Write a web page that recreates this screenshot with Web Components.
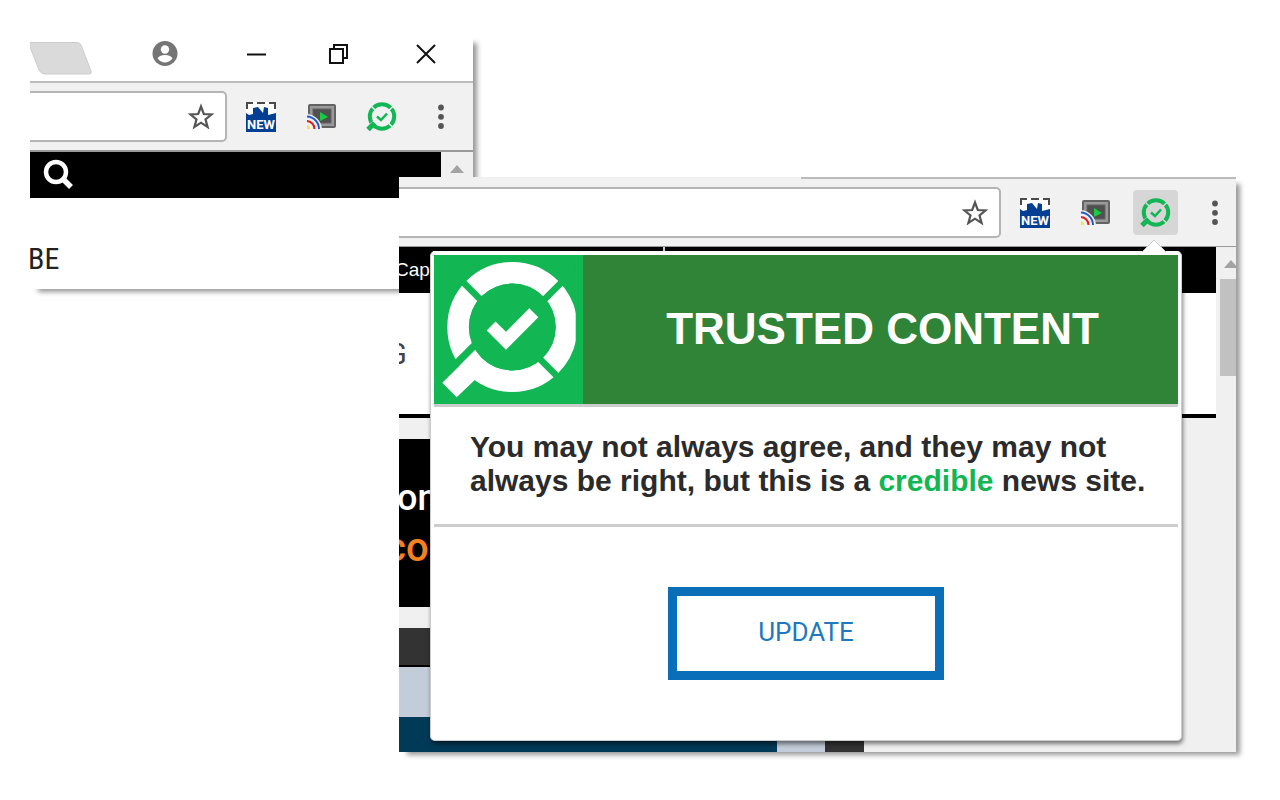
<!DOCTYPE html>
<html lang="en">
<head>
<meta charset="utf-8">
<title>Trusted Content extension</title>
<style>
html, body { margin: 0; background: #fff; }
body { font-family: "Liberation Sans", Arial, sans-serif; color: #222; }
</style>
</head>
<body>
<extension-tour></extension-tour>

<script>
const define = (name, html) => {
  const template = document.createElement('template');
  template.innerHTML = html;
  customElements.define(name, class extends HTMLElement {
    constructor() {
      super();
      this.attachShadow({ mode: 'open' }).append(template.content.cloneNode(true));
    }
  });
};

/* Large magnifier logo with a tick */
define('trust-logo', `
<style>
  :host { display: block; background: #12b754; }
  svg { display: block; width: 100%; height: 100%; }
</style>
<svg viewBox="0 0 149 149" aria-hidden="true">
  <clipPath id="edge"><rect width="141.700" height="149"/></clipPath>
  <g clip-path="url(#edge)">
    <circle cx="78.300" cy="72" r="54.200" fill="none" stroke="#fff" stroke-width="21.600"/>
    <g stroke="#12b754">
      <path d="M1.800 0L150 148.200M78 76.800L150 4.800" stroke-width="6.600"/>
      <path d="M65 66L0 131" stroke-width="7.400"/>
    </g>
    <path d="M8.300 127.800L22.700 142.200L41 124.800L60 122L41 95.500Z" fill="#fff"/>
    <circle cx="78.300" cy="72" r="43.400" fill="#12b754"/>
  </g>
  <path d="M52.700 75.500L61.500 66.500L72 76.700L95.300 53.300L104.300 62.200L72 94.800Z" fill="#fff"/>
</svg>`);

/* Row of extension buttons and the browser menu */
define('extension-bar', `
<style>
  :host { display: flex; align-items: center; }
  button { display: grid; place-items: center; width: 60px; height: 45px; margin: 0; padding: 0; border: 0; background: none; }
  span { display: grid; place-items: center; width: 45px; height: 45px; border-radius: 4px; background: var(--active, transparent); }
  svg { display: block; width: 32px; height: 32px; }
  text { font: bold 13px Roboto, sans-serif; fill: #fff; }
</style>
<button aria-label="New tab extension">
  <svg viewBox="0 0 32 32">
    <path d="M1 1H31V31H1Z" fill="#fff"/>
    <path d="M2 8V2H8M12 2H20M24 2H30V8" fill="none" stroke="#4a4a4a" stroke-width="2"/>
    <path d="M1 31V12L4 14L8 13V7L13 6L18 12L19 6L23 7V14L31 12V31Z" fill="#053f93"/>
    <text x="2" y="28">NEW</text>
  </svg>
</button>
<button aria-label="Cast">
  <svg viewBox="0 0 32 32">
    <rect x="4" y="4" width="26" height="22" rx="1" fill="#999" stroke="#636363" stroke-width="2"/>
    <rect x="8" y="8" width="18" height="14" fill="#505050" stroke="#636363"/>
    <path d="M15 11L23 16L15 20Z" fill="#18cb42"/>
    <path d="M1 13A16 16 0 0 1 17 29H1Z" fill="#f1f1f1"/>
    <g fill="none" stroke-width="2">
      <path d="M2 15.500A12.500 12.500 0 0 1 14 28" stroke="#2457c5"/>
      <path d="M2 20A8 8 0 0 1 9.500 28" stroke="#d6221c"/>
    </g>
    <path d="M2 24A4 4 0 0 1 5 28H2Z" fill="#f4e34c"/>
  </svg>
</button>
<button aria-label="Trusted Content">
  <span>
    <svg viewBox="0 0 32 32">
      <circle cx="17" cy="15.500" r="12.200" fill="none" stroke="#12b754" stroke-width="4"/>
      <path d="M5 4L30 28.500M18 15L30 3.500M11 18L1 27" stroke="var(--active, #f1f1f1)" stroke-width="1.500"/>
      <path d="M9.500 22L3 28.500" stroke="#12b754" stroke-width="5"/>
      <path d="M12 15.500L16 19L22 12.500" fill="none" stroke="#12b754" stroke-width="2.500"/>
    </svg>
  </span>
</button>
<button aria-label="Menu">
  <svg viewBox="0 0 32 32" fill="#555"><circle cx="16" cy="6.500" r="2.900"/><circle cx="16" cy="15.800" r="2.900"/><circle cx="16" cy="25" r="2.900"/></svg>
</button>`);

/* Right-hand end of the address bar, with its bookmark star */
define('browser-toolbar', `
<style>
  :host { display: flex; align-items: center; gap: 4px; height: 67px; box-sizing: border-box; background: #f1f1f1; border-bottom: 1px solid #999; }
  .address { flex: 1; min-width: 0; display: flex; align-items: center; height: 51px; box-sizing: border-box; background: #fff;
    border: 2px solid #b4b4b4; border-left: 0; border-radius: 0 5px 5px 0; padding-right: 10px; }
  input { flex: 1; min-width: 0; border: 0; background: none; outline: 0; font: 18px Roboto, sans-serif; }
  button { border: 0; background: none; padding: 0; }
  svg { display: block; width: 28px; height: 28px; }
  extension-bar { margin-right: var(--bar-end, 2px); }
</style>
<div class="address">
  <input type="text" aria-label="Address">
  <button aria-label="Bookmark this page"><svg viewBox="0 0 28 28"><path d="M14 3.500L16.800 11L24.500 11.500L18.500 16.300L20.600 24L14 19.700L7.400 24L9.500 16.300L3.500 11.500L11.200 11Z" fill="none" stroke="#555" stroke-width="2.200"/></svg></button>
</div>
<extension-bar></extension-bar>`);

/* Scroll bar track with its arrow; a thumb is shown when passed in */
define('scroll-track', `
<style>
  :host { display: block; background: #f0f0f0; overflow: hidden; }
  svg { display: block; width: 14px; height: 8px; margin: 13px 0 11px var(--arrow, 9px); }
  ::slotted(i) { display: block; height: 97px; margin-left: 4px; background: #c1c1c1; }
</style>
<svg viewBox="0 0 14 8"><path d="M0 8L7 0L14 8Z" fill="#a3a3a3"/></svg>
<slot></slot>`);

/* Title bar: inactive tab, profile and window controls */
define('title-bar', `
<style>
  :host { display: flex; align-items: start; justify-content: space-between; height: 47px; box-sizing: border-box; background: #fff; border-bottom: 2px solid #bcbcbc; }
  .tab { width: 62px; height: 33px; margin-top: 6px; }
  .controls { display: flex; gap: 59px; padding: 4px 33px 0 0; }
  button { border: 0; padding: 0; background: none; }
  svg { display: block; }
</style>
<svg class="tab" viewBox="0 0 62 33"><path d="M0 0.500H47Q50 0.500 51 3L61 29Q62 32 59 32H15Q11 32 9 28L0 5Z" fill="#dadada" stroke="#ccc"/></svg>
<div class="controls">
  <button aria-label="Profile"><svg width="28" height="28" viewBox="0 0 28 28"><circle cx="14" cy="13.500" r="12.500" fill="#757575"/><circle cx="14" cy="9.500" r="4.200" fill="#fff"/><path d="M6.500 18.500Q8 15 14 15T21.500 18.500Q18 22.500 14 22.500T6.500 18.500Z" fill="#fff"/></svg></button>
  <button aria-label="Minimise"><svg width="28" height="28" viewBox="0 0 28 28"><path d="M9 14.500H28" stroke="#111" stroke-width="2"/></svg></button>
  <button aria-label="Restore"><svg width="28" height="28" viewBox="0 0 28 28" fill="none" stroke="#111" stroke-width="2"><path d="M5 9H18V23H5ZM9 8V5H22V18H19"/></svg></button>
  <button aria-label="Close"><svg width="28" height="28" viewBox="0 0 28 28"><path d="M5 5L23 23M23 5L5 23" stroke="#111" stroke-width="2"/></svg></button>
</div>`);

/* Back window: the extension icon in an ordinary page */
define('plain-window', `
<style>
  :host { display: grid; grid-template-columns: minmax(0, 1fr); grid-template-rows: auto auto 1fr; overflow: hidden; background: #fff; box-shadow: 6px 5px 5px -2px #999; }
  browser-toolbar { height: 69px; border-bottom-width: 2px; }
  .page { display: grid; grid-template-columns: 1fr 32px; }
  .bar { height: 46px; background: #000; }
  .bar button { display: block; border: 0; padding: 7px 0 0 13px; background: none; }
  svg { display: block; width: 32px; height: 32px; }
  .link { display: block; margin: 42px 0 0; color: #222; text-decoration: none; font: 30px/38px "Liberation Sans Narrow", "Roboto Condensed", Roboto, sans-serif; text-indent: -2px; }
  scroll-track { height: 46px; }
</style>
<title-bar></title-bar>
<browser-toolbar></browser-toolbar>
<div class="page">
  <div>
    <div class="bar"><button aria-label="Search"><svg viewBox="0 0 32 32" fill="none" stroke="#fff"><circle cx="13" cy="13" r="10" stroke-width="4.500"/><path d="M20 20L28 28" stroke-width="5.500"/></svg></button></div>
    <a class="link" href="#">BE</a>
  </div>
  <scroll-track></scroll-track>
</div>`);

/* Popup opened by the extension icon */
define('trust-popup', `
<style>
  :host { display: flex; flex-direction: column; box-sizing: border-box; padding: 3px; background: #fff; border: 1px solid #ccc; border-top-color: #fff; border-radius: 5px; box-shadow: 1px 3px 4px rgba(0,0,0,.5); }
  .arrow { position: absolute; right: 15px; top: -13px; width: 24px; height: 13px; }
  header { display: grid; grid-template-columns: 149px 1fr; height: 149px; background: #2f8437; color: #fff; border-bottom: 3px solid #ccc; }
  h1 { margin: 0; padding-left: 4px; text-align: center; font-size: 44px; line-height: 148px; white-space: nowrap; }
  p { margin: 0; padding: 23px 28px 26px 36px; font-size: 30px; line-height: 34px; font-weight: bold; color: #2b2b2b; border-bottom: 3px solid #ccc; }
  strong { color: #12b754; }
  .action { flex: 1; text-align: center; padding-top: 60px; }
  .action button { box-sizing: border-box; width: 37%; height: 93px; padding: 0 0 4px; border: 9px solid #0b6eb8; background: #fff; color: #2079be; font: 26px Roboto, sans-serif; }
</style>
<svg class="arrow" viewBox="0 0 24 13"><path d="M0 13L12 1L24 13Z" fill="#fff"/><path d="M0 13L12 1L24 13" fill="none" stroke="#ccc"/></svg>
<header><trust-logo></trust-logo><h1>TRUSTED CONTENT</h1></header>
<p>You may not always agree, and they may not always be right, but this is a <strong>credible</strong> news site.</p>
<div class="action"><button>UPDATE</button></div>`);

/* Front window: the page behind the open popup */
define('popup-window', `
<style>
  :host { display: block; position: relative; }
  .frame { overflow: hidden; background: #f0f0f0; box-shadow: 6px 5px 5px -2px #999; }
  .edge { height: 2px; margin-left: 48%; background: #bbb; }
  browser-toolbar { --active: #d6d6d6; --bar-end: -9px; height: 68px; }
  .page { display: grid; grid-template-columns: 1fr 20px; }
  scroll-track { --arrow: 8px; }
  .top { height: 46px; display: grid; grid-template-columns: 264px 2px; background: #000; color: #fff; font-size: 19px; line-height: 46px; text-indent: -4px; }
  .top i { background: #ccc; }
  .nav { height: 121px; background: #fff; border-bottom: 4px solid #000; }
  .nav a { display: block; padding-top: 42px; margin-left: -10px; color: #444; text-decoration: none; font: 30px/38px "Liberation Sans Narrow", "Roboto Condensed", Roboto, sans-serif; }
  .hero { box-sizing: border-box; width: 57%; height: 168px; margin: 21px 0; padding-top: 34px; background: #000; color: #fff; font: 500 36px/50px Roboto, sans-serif; text-indent: -2px; }
  .hero em { display: block; font-style: normal; color: #f58220; font-size: 40px; text-indent: -14px; }
  .dark { width: 57%; height: 37px; background: #333; border-bottom: 2px solid #000; }
  .sky { width: 57%; height: 50px; background: #c3cdd9; }
  .row { display: grid; grid-template-columns: 378px 48px 39px; height: 35px; }
  .row i:nth-child(1) { background: #003a57; }
  .row i:nth-child(2) { background: #c3cdd9; }
  .row i:nth-child(3) { background: #333; }
  trust-popup { position: absolute; inset: 74px 54px 11px 31px; }
</style>
<div class="frame">
  <div class="edge"></div>
  <browser-toolbar></browser-toolbar>
  <div class="page">
    <div>
      <div class="top">Cap<i></i></div>
      <div class="nav"><a href="#">G</a></div>
      <div class="hero">on<em>co</em></div>
      <div class="dark"></div>
      <div class="sky"></div>
      <div class="row"><i></i><i></i><i></i></div>
    </div>
    <scroll-track><i></i></scroll-track>
  </div>
</div>
<trust-popup></trust-popup>`);

define('extension-tour', `
<style>
  :host { display: grid; grid-template-columns: 369fr 74fr 763fr; grid-template-rows: 141px 112px auto; padding: 36px 44px 48px 30px; }
  plain-window { grid-area: 1 / 1 / 3 / 3; }
  popup-window { grid-area: 2 / 2 / 4 / 4; }
</style>
<plain-window></plain-window>
<popup-window></popup-window>`);
</script>
</body>
</html>
